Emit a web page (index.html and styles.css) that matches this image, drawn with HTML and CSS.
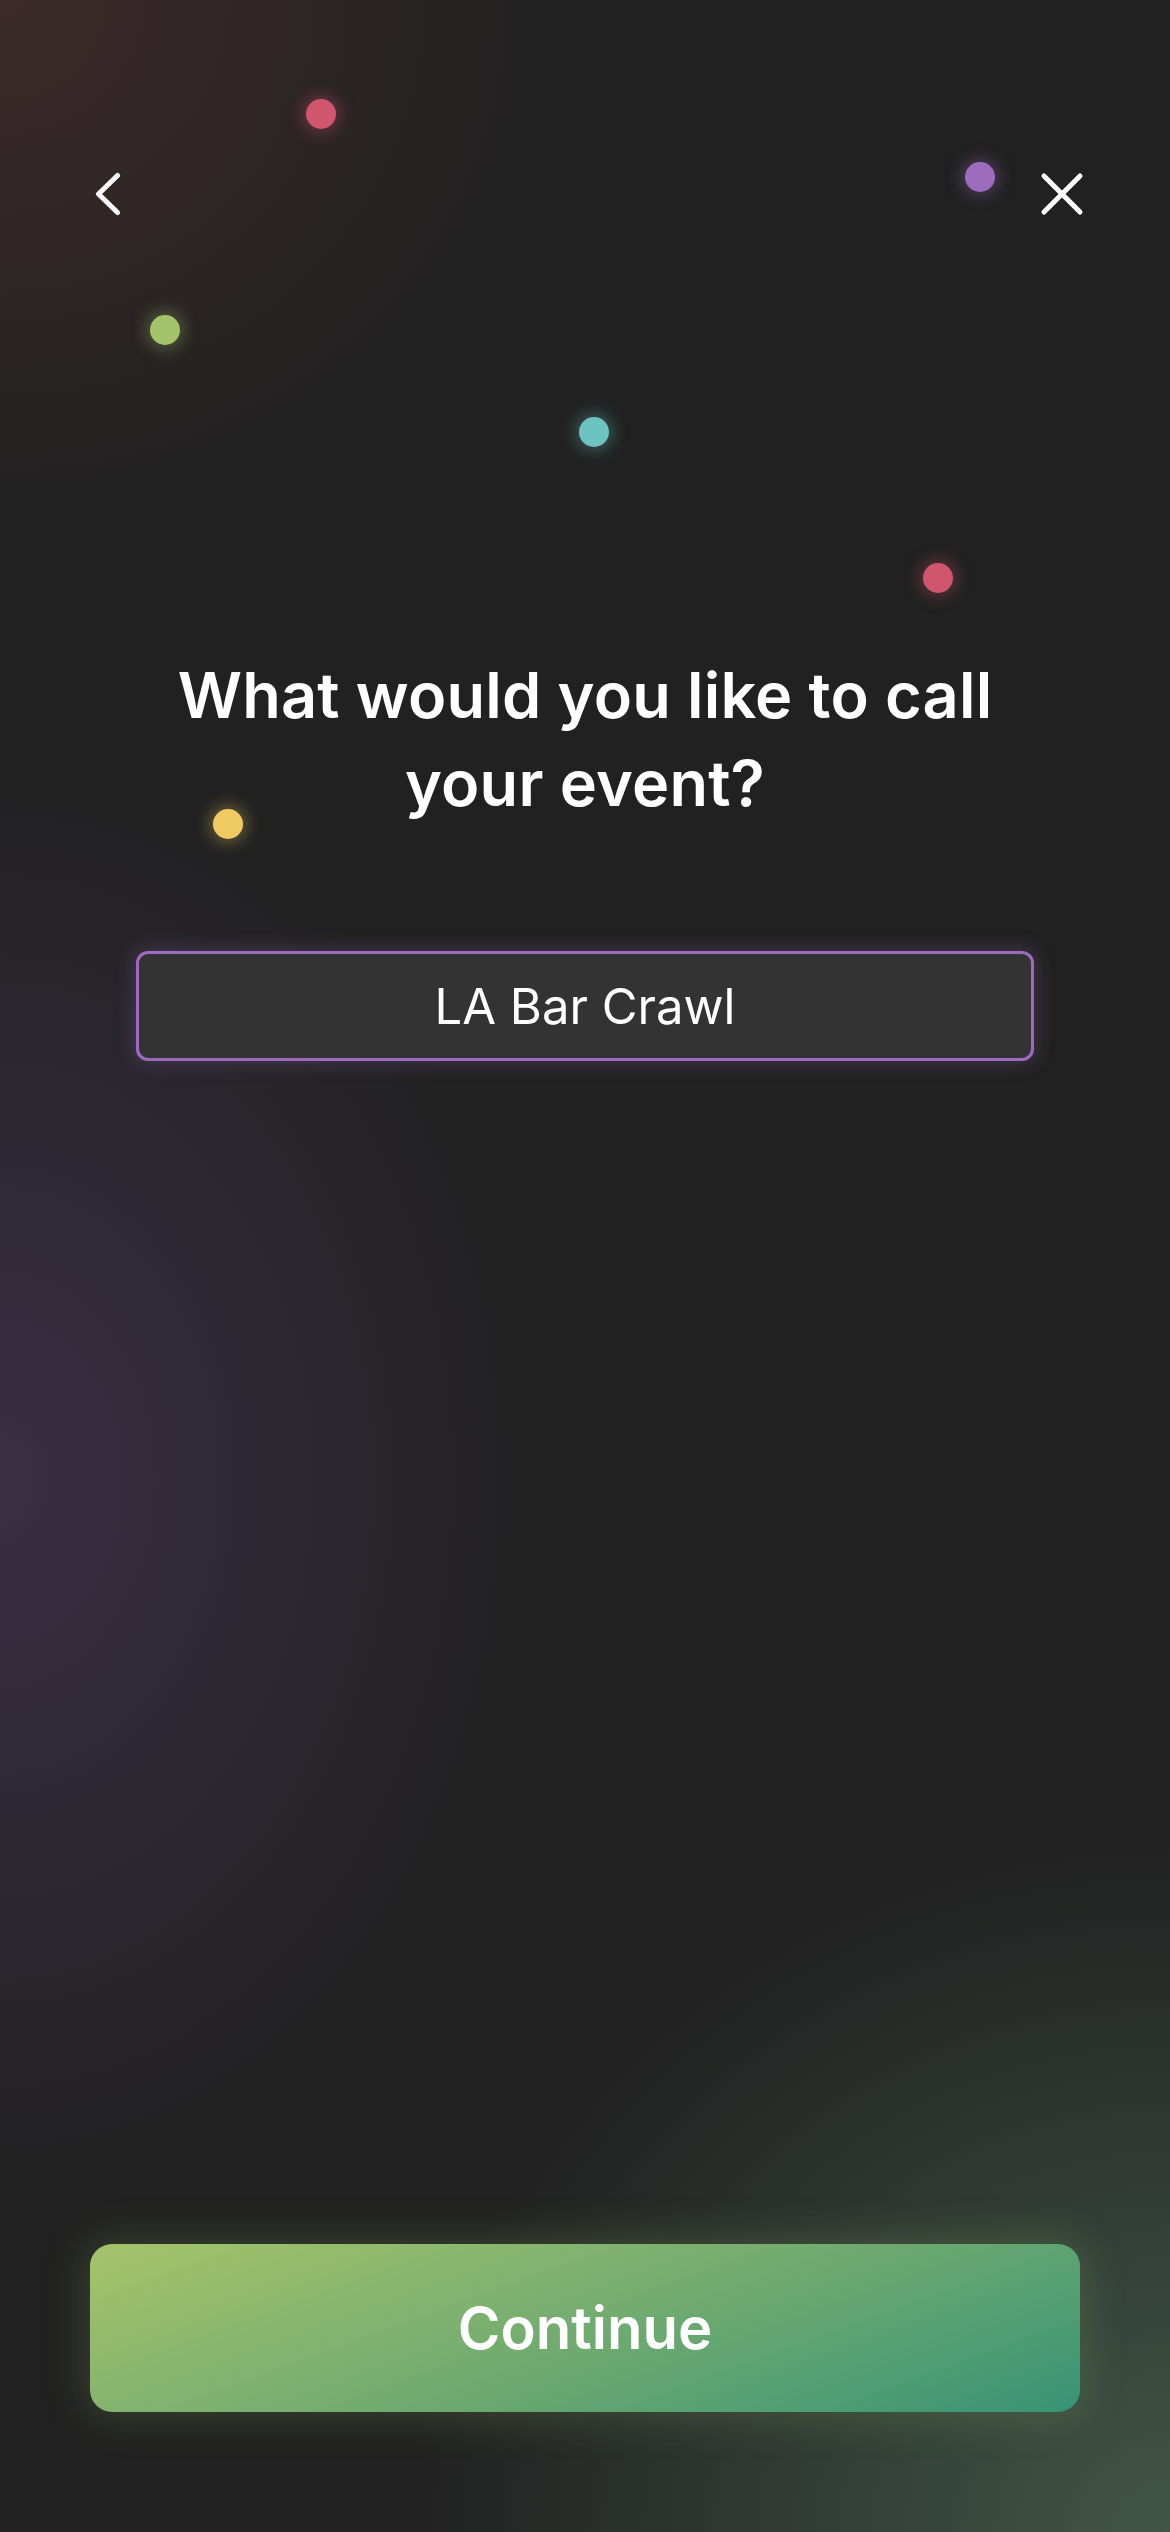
FILE: index.html
```html
<!DOCTYPE html>
<html lang="en">
<head>
<meta charset="utf-8">
<title>Name your event</title>
<link rel="stylesheet" href="styles.css">
</head>
<body>
<div class="screen">
  <div class="dots" aria-hidden="true">
    <span class="dot dot-red" style="left:306px;top:99px"></span>
    <span class="dot dot-purple" style="left:965px;top:162px"></span>
    <span class="dot dot-green" style="left:150px;top:315px"></span>
    <span class="dot dot-cyan" style="left:579px;top:417px"></span>
    <span class="dot dot-red" style="left:923px;top:563px"></span>
    <span class="dot dot-yellow" style="left:213px;top:809px"></span>
  </div>

  <header class="topbar">
    <button class="icon-btn back" aria-label="Back">
      <svg width="26" height="44" viewBox="0 0 26 44"><path d="M22.5 3.5 L3.5 22 L22.5 40.5" fill="none" stroke="#fff" stroke-width="5" stroke-linecap="round" stroke-linejoin="round"/></svg>
    </button>
    <button class="icon-btn close" aria-label="Close">
      <svg width="44" height="44" viewBox="0 0 44 44"><path d="M4 4 L40 40 M40 4 L4 40" fill="none" stroke="#fff" stroke-width="5" stroke-linecap="round"/></svg>
    </button>
  </header>

  <h1 class="title">What would you like to call<br>your event?</h1>

  <div class="field">
    <span class="field-text">LA Bar Crawl</span>
  </div>

  <button class="continue">Continue</button>
</div>
</body>
</html>
```

FILE: styles.css
```css
* { box-sizing: border-box; }

html, body {
  margin: 0;
  padding: 0;
  background: #212121;
}

.screen {
  position: relative;
  width: 1170px;
  height: 2532px;
  overflow: hidden;
  display: flex;
  flex-direction: column;
  font-family: "Inter", "Noto Sans", sans-serif;
  color: #fff;
  background:
    radial-gradient(ellipse 560px 520px at 0 0, rgba(70, 45, 45, 0.75), rgba(70, 45, 45, 0) 100%),
    radial-gradient(ellipse 540px 720px at 0 1480px, rgba(64, 50, 76, 0.8), rgba(64, 50, 76, 0) 100%),
    radial-gradient(ellipse 760px 700px at 1170px 2532px, rgba(70, 95, 78, 0.85), rgba(70, 95, 78, 0) 100%),
    #212121;
}

.dots {
  position: absolute;
  inset: 0;
  pointer-events: none;
}

.dot {
  position: absolute;
  width: 30px;
  height: 30px;
  border-radius: 50%;
}
.dot-red { background: #d0566e; box-shadow: 0 0 16px 4px rgba(208, 86, 110, 0.35); }
.dot-purple { background: #9d6cbd; box-shadow: 0 0 16px 4px rgba(157, 108, 189, 0.35); }
.dot-green { background: #a4c46a; box-shadow: 0 0 16px 4px rgba(164, 196, 106, 0.35); }
.dot-cyan { background: #6cc3c0; box-shadow: 0 0 16px 4px rgba(108, 195, 192, 0.35); }
.dot-yellow { background: #f0ca62; box-shadow: 0 0 16px 4px rgba(240, 202, 98, 0.35); }

.topbar {
  display: flex;
  justify-content: space-between;
  align-items: center;
  margin-top: 172px;
  padding: 0 86px 0 95px;
  height: 44px;
}

.icon-btn {
  background: none;
  border: 0;
  padding: 0;
  margin: 0;
  display: block;
  line-height: 0;
}

.title {
  margin: 435px 0 0;
  text-align: center;
  font-weight: 600;
  font-size: 63px;
  line-height: 88px;
  letter-spacing: 0.2px;
}

.field {
  margin: 124px auto 0;
  width: 898px;
  height: 110px;
  border: 3px solid #9c6bbe;
  border-radius: 12px;
  background: #333333;
  box-shadow: 0 0 18px 4px rgba(157, 108, 189, 0.22);
  display: flex;
  align-items: center;
  justify-content: center;
}

.field-text {
  font-size: 49px;
  font-weight: 400;
  color: #fff;
}

.continue {
  margin: auto 90px 120px;
  height: 168px;
  border: 0;
  border-radius: 22px;
  background: linear-gradient(160deg, #a5c46a 0%, #7db06f 40%, #56a072 75%, #379376 100%);
  box-shadow: 0 0 40px 6px rgba(140, 180, 100, 0.22);
  color: #fff;
  font-family: "Inter", "Noto Sans", sans-serif;
  font-weight: 600;
  font-size: 58px;
}
```
